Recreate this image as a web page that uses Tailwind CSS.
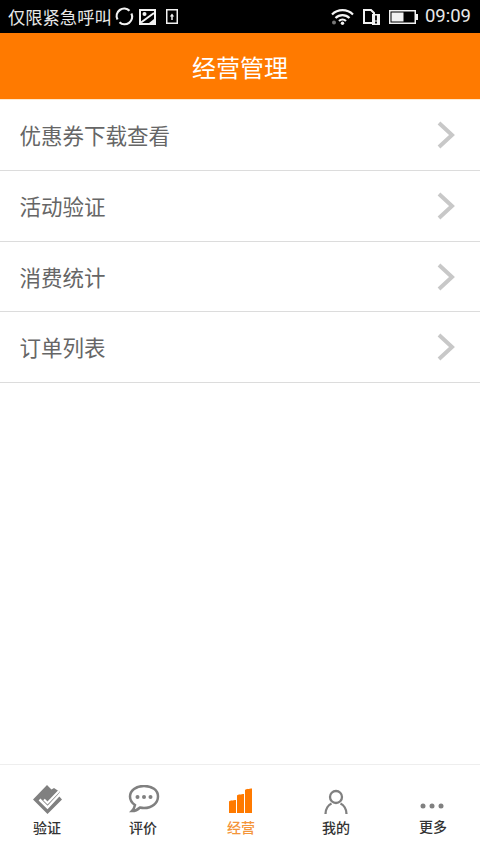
<!DOCTYPE html>
<html lang="zh-CN">
<head>
<meta charset="utf-8">
<script src="https://cdn.jsdelivr.net/npm/@tailwindcss/browser@4"></script>
</head>
<body class="m-0 bg-white">
<div class="w-[480px] h-[854px] flex flex-col overflow-hidden bg-white font-['Noto_Sans_CJK_SC','Noto_Sans',sans-serif]">
  <div class="h-[33px] bg-black flex items-center justify-between pl-[8px] pr-[9px] text-[#e8e8e8] shrink-0">
    <div class="flex items-center">
      <span class="text-[17.300px] leading-none w-[105px] whitespace-nowrap">仅限紧急呼叫</span>
      <svg class="ml-[2px]" width="19" height="19" viewBox="0 0 19 19" fill="none" stroke="#f2f2f2" stroke-width="2.200"><path d="M2.500 12.500A7.500 7.500 0 0 1 14.500 3.800"/><path d="M16.400 6.500A7.500 7.500 0 0 1 4.500 15.200"/></svg>
      <svg class="ml-[5px]" width="17" height="16" viewBox="0 0 17 16" fill="none" stroke="#f2f2f2" stroke-width="2"><rect x="1" y="1" width="15" height="14"/><path d="M2 13.500L15 4" stroke-width="2"/><circle cx="5.500" cy="5" r="2" fill="#f2f2f2" stroke="none"/><path d="M10 14l5-4v4z" fill="#f2f2f2" stroke="none"/></svg>
      <svg class="ml-[10px]" width="12" height="15" viewBox="0 0 12 15" fill="none" stroke="#f2f2f2" stroke-width="1.500"><rect x="0.750" y="0.750" width="10.500" height="13.500"/><path d="M6 11V6" stroke-width="1.500"/><path d="M3.800 7.500L6 4.500l2.200 3z" fill="#f2f2f2" stroke="none"/></svg>
    </div>
    <div class="flex items-center">
      <svg width="23" height="17" viewBox="0 0 23 17" fill="none" stroke="#f4f4f4" stroke-width="2.200"><path d="M1 6.500a15 15 0 0 1 21 0"/><path d="M4.500 10a10 10 0 0 1 14 0"/><path d="M8 13a5 5 0 0 1 7 0"/><circle cx="11.500" cy="15.300" r="1.700" fill="#f4f4f4" stroke="none"/><circle cx="3" cy="14.500" r="2" fill="#777" stroke="none"/></svg>
      <svg class="ml-[9px]" width="17" height="16" viewBox="0 0 17 16"><path d="M1 15V1h7l3 3v1" fill="none" stroke="#f2f2f2" stroke-width="2"/><path d="M1 14h8" stroke="#f2f2f2" stroke-width="2"/><path d="M9 5h8v11H9z" fill="#f2f2f2"/><path d="M13 6.500v5M13 12.500v2" stroke="#000" stroke-width="1.800"/></svg>
      <svg class="ml-[9px]" width="29" height="14" viewBox="0 0 29 14"><rect x="0.750" y="0.750" width="25.500" height="12.500" fill="none" stroke="#f2f2f2" stroke-width="1.500"/><rect x="2.500" y="2.500" width="12" height="9" fill="#f2f2f2"/><rect x="27" y="4" width="2" height="6" fill="#f2f2f2"/></svg>
      <span class="ml-[7px] text-[18.500px] leading-none font-['Roboto',sans-serif] text-[#e8e8e8]">09:09</span>
    </div>
  </div>
  <header class="h-[66px] pt-[2px] bg-[#ff7a00] flex items-center justify-center shrink-0 text-white text-[24px] leading-none">经营管理</header>
  <div class="h-[1px] bg-[#ffe8cc] shrink-0"></div>
  <ul class="shrink-0 text-[#666666] text-[21.500px] leading-none">
    <li class="h-[71px] border-b border-[#dcdcdc] flex items-center justify-between pl-[19.500px] pr-[25px]">
      <span>优惠券下载查看</span>
      <svg width="18" height="28" viewBox="0 0 18 28" fill="none" stroke="#c8c8c8" stroke-width="4"><path d="M2 2l13 12L2 26"/></svg>
    </li>
    <li class="h-[71px] border-b border-[#dcdcdc] flex items-center justify-between pl-[19.500px] pr-[25px]">
      <span>活动验证</span>
      <svg width="18" height="28" viewBox="0 0 18 28" fill="none" stroke="#c8c8c8" stroke-width="4"><path d="M2 2l13 12L2 26"/></svg>
    </li>
    <li class="h-[70px] border-b border-[#dcdcdc] flex items-center justify-between pl-[19.500px] pr-[25px]">
      <span>消费统计</span>
      <svg width="18" height="28" viewBox="0 0 18 28" fill="none" stroke="#c8c8c8" stroke-width="4"><path d="M2 2l13 12L2 26"/></svg>
    </li>
    <li class="h-[71px] border-b border-[#dcdcdc] flex items-center justify-between pl-[19.500px] pr-[25px]">
      <span>订单列表</span>
      <svg width="18" height="28" viewBox="0 0 18 28" fill="none" stroke="#c8c8c8" stroke-width="4"><path d="M2 2l13 12L2 26"/></svg>
    </li>
  </ul>
  <div class="flex-1"></div>
  <nav class="h-[90px] shrink-0 border-t border-[#eeeeee] grid grid-cols-5 text-[14px] leading-none font-medium text-[#333]">
    <div class="flex flex-col items-center pt-[20px]">
      <svg class="mr-[1px]" width="30" height="30" viewBox="0 0 30 30"><path d="M14 0L0 14.500 14.500 29 29 14.500 25 10 27 7 21 3 18.500 4.500z" fill="#808080"/><path d="M6.500 14.500l8 8L28 8" fill="none" stroke="#fff" stroke-width="2.500"/><path d="M11 14.500l3.500 3.500L26 6" fill="none" stroke="#fff" stroke-width="2.200"/></svg>
      <span class="mt-[5px] mr-[2px]">验证</span>
    </div>
    <div class="flex flex-col items-center pt-[20px]">
      <svg width="32" height="30" viewBox="0 0 32 30" fill="none"><path d="M16 1C8 1 2 5.500 2 11.500c0 3.500 2 6.500 5 8.500-.5 2.500-2 5-3 6 3 0 6-1.500 8-3.500 1.300.3 2.600.5 4 .5 8 0 14-5 14-11.500S24 1 16 1z" stroke="#808080" stroke-width="2.500"/><circle cx="9.500" cy="12" r="2" fill="#808080"/><circle cx="16" cy="12" r="2" fill="#808080"/><circle cx="22.500" cy="12" r="2" fill="#808080"/></svg>
      <span class="mt-[5px] mr-[2px]">评价</span>
    </div>
    <div class="flex flex-col items-center pt-[20px] text-[#f4953a]">
      <svg class="ml-[1px]" width="24" height="30" viewBox="0 0 24 30" fill="#ff7a00"><path d="M0 16.500c0-1 7-1.500 7-1.500v13H0zM8 10.500c0-1 7-1.500 7-1.500v19H8zM16 5c0-1 7-1.500 7-1.500V28h-7z"/></svg>
      <span class="mt-[5px] ml-[2px]">经营</span>
    </div>
    <div class="flex flex-col items-center pt-[20px]">
      <svg width="24" height="30" viewBox="0 0 24 30" fill="none" stroke="#808080" stroke-width="2.300"><circle cx="12" cy="12" r="6"/><path d="M1.500 29c0-5 3-9 6-10.500M22.500 29c0-5-3-9-6-10.500"/></svg>
      <span class="mt-[5px]">我的</span>
    </div>
    <div class="flex flex-col items-center pt-[20px]">
      <svg width="24" height="30" viewBox="0 0 24 30" fill="#808080"><circle cx="3" cy="21" r="2.500"/><circle cx="12" cy="21" r="2.500"/><circle cx="21" cy="21" r="2.500"/></svg>
      <span class="mt-[4px] ml-[2px]">更多</span>
    </div>
  </nav>
</div>
</body>
</html>
